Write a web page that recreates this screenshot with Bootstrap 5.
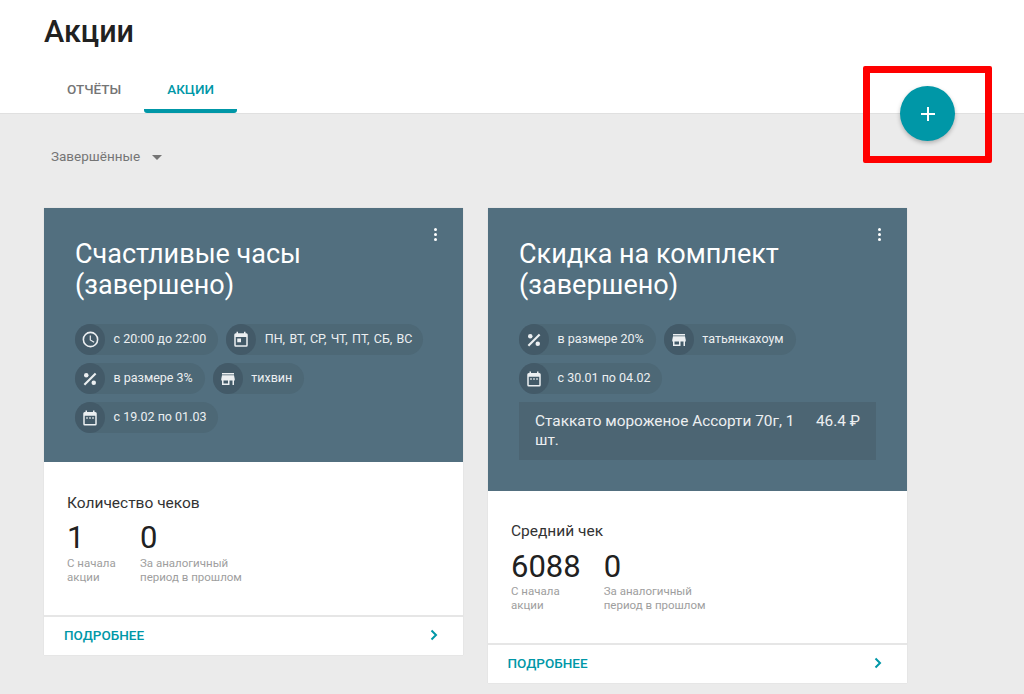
<!DOCTYPE html>
<html lang="ru"><head><meta charset="utf-8">
<link rel="stylesheet" href="https://cdn.jsdelivr.net/npm/bootstrap@5.3.0/dist/css/bootstrap.min.css">
<style>
html,body{height:694px;overflow:hidden}
body{background:#ebebeb;font-family:Roboto,"Liberation Sans",sans-serif;color:#212121}
.top-area{height:114px;background:#fff;border-bottom:1px solid #e0e0e0;padding:15px 0 0 44px}
.page-title{font-size:30.500px;font-weight:500;line-height:34px;margin:0 0 23px;color:#212121}
.tab-item{height:41px;padding:8px 23px 0;font-size:13.500px;font-weight:500;color:#757575;line-height:18px;border-bottom:4px solid transparent;border-radius:0 0 3px 3px;text-decoration:none}
.tab-on{color:#0097a7;border-bottom-color:#0097a7;width:93px}
.filter-row{padding:33px 0 0 51px;height:94px;font-size:13.500px;color:#757575;line-height:18px}
.caret-down{width:0;height:0;border:5px solid transparent;border-top-color:#757575;border-bottom:0;margin-left:12px}
.cards-wrap{padding-left:44px;gap:25px}
.promo{background:#fff;box-shadow:0 0 1px rgba(0,0,0,.12);width:419px}
.promo-head{background:#526f7f;padding:31px 31px 0;color:#fff;position:relative}
.head-a{height:254px}
.head-b{height:283px}
.promo-title{font-size:27px;font-weight:400;line-height:31px;margin:0 0 23px}
.dots{position:absolute;top:20px;right:26px;width:3px;display:flex;flex-direction:column;gap:2px}
.dots i{display:block;width:3px;height:3px;background:#fff;border-radius:50%}
.chip-row{gap:8px;flex-wrap:wrap}
.chip{height:31px;border-radius:16px;background:#4d6876;display:flex;align-items:center;font-size:12.500px;padding-right:12px;white-space:nowrap;color:#eceff1}
.chip-ico{width:30px;height:31px;border-radius:50%;background:#435a68;display:flex;align-items:center;justify-content:center;margin-right:8.500px}
.chip-days{word-spacing:1.200px;padding-right:11px}
.goods{background:#4c6573;margin-top:8px;padding:10px 16px 0;height:58px;font-size:15.400px;line-height:19px;display:flex;justify-content:space-between;color:#eceff1}
.goods-name{width:270px}
.promo-body{padding:31px 23px 0;height:153px}
.metric-title{font-size:15.500px;line-height:20px;margin-bottom:7px;color:#333}
.metric-num{font-size:31px;line-height:36px;color:#212121}
.metric-cap{font-size:11.500px;line-height:14px;color:#9e9e9e}
.metric-gap{gap:23px}
.metric-first{min-width:50px}
.promo-foot{border-top:2px solid #e6e6e6;height:40px;padding:0 24px 2px 20px;display:flex;align-items:center;justify-content:space-between;color:#0097a7;font-size:13.500px;font-weight:500;background:#fff}
.body-b{height:152px;padding-top:30px}
.body-b .metric-title{margin-bottom:8px}
.body-b .metric-cap{margin-top:-1px;margin-bottom:1px}
.foot-b{padding-left:19.500px}
.fab-btn{position:absolute;left:900px;top:86px;width:55px;height:55px;border-radius:50%;background:#0097a7;box-shadow:0 2px 4px rgba(0,0,0,.25);display:flex;align-items:center;justify-content:center;border:0;padding:0}
.red-frame{position:absolute;left:863px;top:66px;width:129px;height:97px;border:7px solid #f00;border-radius:2px;pointer-events:none}
</style></head>
<body>
<div class="top-area">
  <h1 class="page-title">Акции</h1>
  <div class="d-flex">
    <a class="tab-item" href="#">ОТЧЁТЫ</a>
    <a class="tab-item tab-on" href="#">АКЦИИ</a>
  </div>
</div>
<div class="filter-row d-flex align-items-start"><span>Завершённые</span><span class="caret-down mt-2"></span></div>
<div class="d-flex align-items-start cards-wrap">
  <div class="promo">
    <div class="promo-head head-a">
      <div class="dots"><i></i><i></i><i></i></div>
      <h2 class="promo-title">Счастливые часы<br>(завершено)</h2>
      <div class="d-flex chip-row">
        <div class="chip"><span class="chip-ico"><svg width="19" height="19" viewBox="0 0 24 24" fill="#eceff1"><path d="M12 2a10 10 0 1 0 0 20 10 10 0 0 0 0-20zm0 18a8 8 0 1 1 0-16 8 8 0 0 1 0 16zm.5-13H11v6l5.2 3.1.8-1.2-4.5-2.7z"/></svg></span>с 20:00 до 22:00</div>
        <div class="chip chip-days"><span class="chip-ico"><svg width="18" height="18" viewBox="0 0 24 24" fill="#eceff1"><path d="M19 3h-1V1h-2v2H8V1H6v2H5a2 2 0 0 0-2 2v14a2 2 0 0 0 2 2h14a2 2 0 0 0 2-2V5a2 2 0 0 0-2-2zm0 16H5V8h14zM7 10h5v5H7z"/></svg></span>ПН, ВТ, СР, ЧТ, ПТ, СБ, ВС</div>
      </div>
      <div class="d-flex chip-row mt-2">
        <div class="chip"><span class="chip-ico"><svg width="18" height="18" viewBox="0 0 24 24" fill="#eceff1"><circle cx="7" cy="7" r="3"/><circle cx="17" cy="17" r="3"/><path d="M18.500 3.500 20.500 5.500 5.500 20.500 3.500 18.500z"/></svg></span>в размере 3%</div>
        <div class="chip"><span class="chip-ico"><svg width="18" height="18" viewBox="0 0 24 24" fill="#eceff1"><path d="M20 4H4v2h16zm1 10v-2l-1-5H4l-1 5v2h1v6h10v-6h4v6h2v-6zm-9 4H6v-4h6z"/></svg></span>тихвин</div>
      </div>
      <div class="d-flex chip-row mt-2">
        <div class="chip"><span class="chip-ico"><svg width="18" height="18" viewBox="0 0 24 24" fill="#eceff1"><path d="M9 11H7v2h2zm4 0h-2v2h2zm4 0h-2v2h2zm2-7h-1V2h-2v2H8V2H6v2H5a2 2 0 0 0-2 2v14a2 2 0 0 0 2 2h14a2 2 0 0 0 2-2V6a2 2 0 0 0-2-2zm0 16H5V9h14z"/></svg></span>с 19.02 по 01.03</div>
      </div>
    </div>
    <div class="promo-body">
      <div class="metric-title">Количество чеков</div>
      <div class="d-flex metric-gap">
        <div class="metric-first"><div class="metric-num">1</div><div class="metric-cap">С начала<br>акции</div></div>
        <div><div class="metric-num">0</div><div class="metric-cap">За аналогичный<br>период в прошлом</div></div>
      </div>
    </div>
    <div class="promo-foot"><span>ПОДРОБНЕЕ</span><svg width="10" height="12" viewBox="0 0 10 12"><path d="M2.500 1.500 7 6l-4.500 4.500" fill="none" stroke="#0097a7" stroke-width="2"/></svg></div>
  </div>
  <div class="promo">
    <div class="promo-head head-b">
      <div class="dots"><i></i><i></i><i></i></div>
      <h2 class="promo-title">Скидка на комплект<br>(завершено)</h2>
      <div class="d-flex chip-row">
        <div class="chip"><span class="chip-ico"><svg width="18" height="18" viewBox="0 0 24 24" fill="#eceff1"><circle cx="7" cy="7" r="3"/><circle cx="17" cy="17" r="3"/><path d="M18.500 3.500 20.500 5.500 5.500 20.500 3.500 18.500z"/></svg></span>в размере 20%</div>
        <div class="chip"><span class="chip-ico"><svg width="18" height="18" viewBox="0 0 24 24" fill="#eceff1"><path d="M20 4H4v2h16zm1 10v-2l-1-5H4l-1 5v2h1v6h10v-6h4v6h2v-6zm-9 4H6v-4h6z"/></svg></span>татьянкахоум</div>
      </div>
      <div class="d-flex chip-row mt-2">
        <div class="chip"><span class="chip-ico"><svg width="18" height="18" viewBox="0 0 24 24" fill="#eceff1"><path d="M9 11H7v2h2zm4 0h-2v2h2zm4 0h-2v2h2zm2-7h-1V2h-2v2H8V2H6v2H5a2 2 0 0 0-2 2v14a2 2 0 0 0 2 2h14a2 2 0 0 0 2-2V6a2 2 0 0 0-2-2zm0 16H5V9h14z"/></svg></span>с 30.01 по 04.02</div>
      </div>
      <div class="goods"><span class="goods-name">Стаккато мороженое Ассорти 70г, 1 шт.</span><span>46.4 ₽</span></div>
    </div>
    <div class="promo-body body-b">
      <div class="metric-title">Средний чек</div>
      <div class="d-flex metric-gap">
        <div><div class="metric-num">6088</div><div class="metric-cap">С начала<br>акции</div></div>
        <div><div class="metric-num">0</div><div class="metric-cap">За аналогичный<br>период в прошлом</div></div>
      </div>
    </div>
    <div class="promo-foot foot-b"><span>ПОДРОБНЕЕ</span><svg width="10" height="12" viewBox="0 0 10 12"><path d="M2.500 1.500 7 6l-4.500 4.500" fill="none" stroke="#0097a7" stroke-width="2"/></svg></div>
  </div>
</div>
<button class="fab-btn" aria-label="Добавить"><svg width="14" height="14" viewBox="0 0 14 14"><path d="M7 0v14M0 7h14" stroke="#fff" stroke-width="2"/></svg></button>
<div class="red-frame"></div>
<script src="https://cdn.jsdelivr.net/npm/bootstrap@5.3.0/dist/js/bootstrap.bundle.min.js"></script>
</body></html>
